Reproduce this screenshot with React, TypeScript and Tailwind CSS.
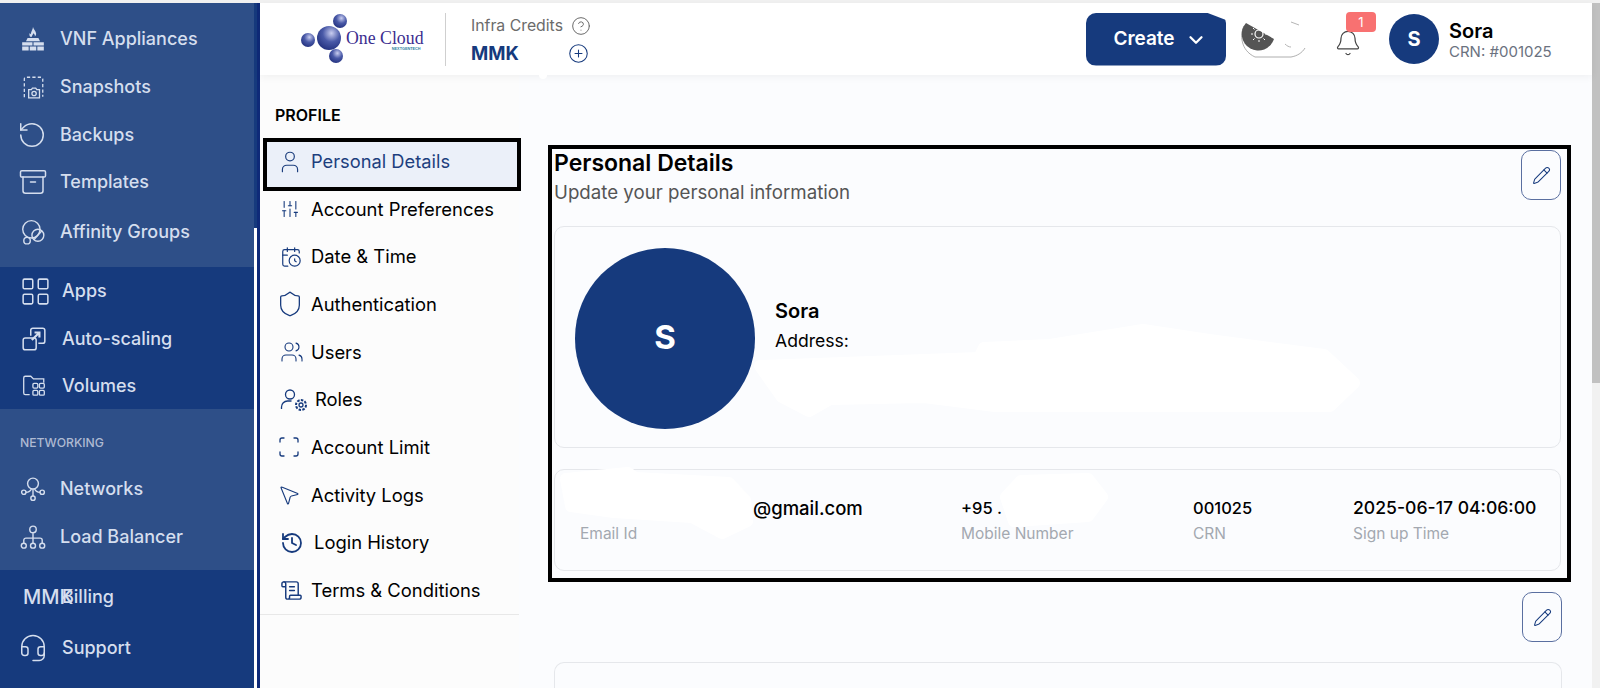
import React from 'react'
import { Archive, ChevronDown, CircleHelp, CirclePlus, Headset, History, LayoutGrid, MousePointer2, Pencil, RotateCcw, Scan, ScrollText, Shield, SlidersVertical, User, Users, CalendarClock, Bell } from 'lucide-react'

const ic = 'w-[26px] h-[26px] shrink-0'

function FireWall() {
  return (
    <svg viewBox="0 0 24 24" className={ic} fill="currentColor">
      <path d="M12 1c.6 2.200 2.600 3.600 2.900 6 .1 1.100-.4 2-1.200 2.800.2-1.200-.3-2.300-1.400-3-.1 1.100-1.300 1.900-1.300 3.100H9.300c-.7-1-.8-2.200-.3-3.400.3.500.6.800 1 1 .1-2.500 1.900-4 2-6.500z" />
      <path d="M7 11h10l1.500 3h-13zM2 15h9.500v3H2zM12.500 15H22v3h-9.500zM2 19h6v3.500H2zM9 19h6v3.500H9zM16 19h6v3.500h-6z" />
    </svg>
  )
}
function SnapshotIcon() {
  return (
    <svg viewBox="0 0 24 24" className={ic} fill="none" stroke="currentColor" strokeWidth="1.200">
      <path strokeDasharray="3 2" d="M4 21.500V4.500a1.500 1.500 0 0 1 1.500-1.500h14a1.500 1.500 0 0 1 1.500 1.500V21" />
      <path d="M8 22v-7.500h2.500l1-1.500h3l1 1.500H18V22z" />
      <circle cx="13" cy="18" r="2" />
    </svg>
  )
}
function AffinityIcon() {
  return (
    <svg viewBox="0 0 24 24" className={ic} fill="none" stroke="currentColor" strokeWidth="1.300">
      <circle cx="10.500" cy="9.500" r="8" />
      <circle cx="16.500" cy="15" r="5.500" />
      <circle cx="6.500" cy="20" r="3" />
      <path d="M13 19 20 11" />
    </svg>
  )
}
function AutoScaleIcon() {
  return (
    <svg viewBox="0 0 24 24" className={ic} fill="none" stroke="currentColor" strokeWidth="1.400">
      <path d="M9 9V4a2 2 0 0 1 2-2h9a2 2 0 0 1 2 2v10a2 2 0 0 1-2 2h-4" />
      <rect x="2" y="11" width="12" height="11" rx="2" />
      <path d="M10 13l7-7M12.500 6H17v4.500" strokeWidth="2" />
    </svg>
  )
}
function VolumeIcon() {
  return (
    <svg viewBox="0 0 24 24" className={ic} fill="none" stroke="currentColor" strokeWidth="1.200">
      <path d="M8 20H4a1.500 1.500 0 0 1-1.500-1.500v-14A1.500 1.500 0 0 1 4 3h5l2.500 2.500H21V9" />
      <rect x="11" y="9.500" width="4.500" height="4.500" rx="1" />
      <rect x="17" y="9.500" width="4.500" height="4.500" rx="1" />
      <rect x="11" y="16" width="4.500" height="4.500" rx="1" />
      <rect x="17" y="16" width="4.500" height="4.500" rx="1" />
    </svg>
  )
}
function NetworkIcon() {
  return (
    <svg viewBox="0 0 24 24" className={ic} fill="none" stroke="currentColor" strokeWidth="1.300">
      <circle cx="12" cy="7" r="5" />
      <circle cx="3.500" cy="15" r="2" />
      <circle cx="20.500" cy="15" r="2" />
      <circle cx="12" cy="20.500" r="2" />
      <path d="M12 12v6.500M5.500 15c2 0 4-.5 5-3M18.500 15c-2 0-4-.5-5-3" />
    </svg>
  )
}
function BalancerIcon() {
  return (
    <svg viewBox="0 0 24 24" className={ic} fill="none" stroke="currentColor" strokeWidth="1.300">
      <circle cx="12" cy="5" r="3" />
      <circle cx="3.500" cy="20" r="2.300" />
      <circle cx="12" cy="20" r="2.300" />
      <circle cx="20.500" cy="20" r="2.300" />
      <path d="M12 8v9.500M3.500 17.500V15a2 2 0 0 1 2-2h13a2 2 0 0 1 2 2v2.500" />
    </svg>
  )
}
function RolesIcon() {
  return (
    <svg viewBox="0 0 28 24" className="h-[24px] w-[28px] shrink-0" fill="none" stroke="#163a7d" strokeWidth="1.300">
      <circle cx="10" cy="6.500" r="4.500" />
      <path d="M1.500 21v-2a6 6 0 0 1 6-6h4" />
      <circle cx="21" cy="17" r="2" />
      <circle cx="21" cy="17" r="5" strokeDasharray="2.500 1.300" strokeWidth="2" />
    </svg>
  )
}

function SideItem({ icon, label, h, wide }: { icon: React.ReactNode; label: string; h: string; wide?: boolean }) {
  return (
    <div className={`flex items-center pl-[20px] text-[#d5deee] ${h}`}>
      <div className={`${wide ? 'w-[42px] pl-[1px]' : 'w-[40px]'} shrink-0`}>{icon}</div>
      <span className="text-[18px] font-medium leading-none">{label}</span>
    </div>
  )
}

function Sidebar() {
  return (
    <aside className="flex w-[260px] shrink-0 bg-[#163a7d]">
      <div className="flex w-[254px] flex-col">
        <div className="flex h-[264px] flex-col bg-[#2e4f88] pt-[12px]">
          <SideItem h="h-[48px]" icon={<FireWall />} label="VNF Appliances" />
          <SideItem h="h-[48px]" icon={<SnapshotIcon />} label="Snapshots" />
          <SideItem h="h-[47px]" icon={<RotateCcw className="-ml-[3px] h-[30px] w-[30px]" strokeWidth={1.200} />} label="Backups" />
          <SideItem h="h-[48px]" icon={<Archive className="-ml-[2px] h-[30px] w-[30px]" strokeWidth={1.200} />} label="Templates" />
          <SideItem h="h-[51px]" icon={<AffinityIcon />} label="Affinity Groups" />
        </div>
        <div className="flex h-[142px] flex-col bg-[#163a7d]">
          <SideItem wide h="h-[48px]" icon={<LayoutGrid className="-ml-[2px] h-[33px] w-[33px]" strokeWidth={1.100} />} label="Apps" />
          <SideItem wide h="h-[47px]" icon={<AutoScaleIcon />} label="Auto-scaling" />
          <SideItem wide h="h-[47px]" icon={<VolumeIcon />} label="Volumes" />
        </div>
        <div className="flex h-[161px] flex-col bg-[#2e4f88]">
          <div className="flex h-[56px] items-center pl-[20px] pt-[12px] text-[12.200px] font-medium text-[#aebad2]">NETWORKING</div>
          <SideItem h="h-[48px]" icon={<NetworkIcon />} label="Networks" />
          <SideItem h="h-[47px]" icon={<BalancerIcon />} label="Load Balancer" />
        </div>
        <div className="flex h-[54px] items-center pl-[23px] text-[#d5deee]">
          <span className="w-0 text-[20px] font-medium leading-none">MMK</span>
          <span className="ml-[39px] text-[18px] font-medium leading-none">Billing</span>
        </div>
        <SideItem wide h="h-[48px]" icon={<Headset className="-ml-[3px] h-[30px] w-[30px]" strokeWidth={1.200} />} label="Support" />
      </div>
      <div className="mt-[225px] w-[3px] bg-white" />
      <div className="w-[3px] bg-[#0f2a78]" />
    </aside>
  )
}

function Logo() {
  return (
    <div className="flex h-[72px] w-[185px] items-center justify-end pr-[20px]">
      <div className="flex h-[54px] w-[124px] items-center">
        <svg viewBox="0 0 46 50" className="h-[50px] w-[46px] shrink-0">
          <defs>
            <radialGradient id="ball" cx="0.600" cy="0.300" r="0.800">
              <stop offset="0" stopColor="#c9cdf0" />
              <stop offset="0.450" stopColor="#4a5aa8" />
              <stop offset="1" stopColor="#1c2a78" />
            </radialGradient>
          </defs>
          <circle cx="39" cy="7" r="7" fill="url(#ball)" />
          <circle cx="28" cy="24" r="12" fill="url(#ball)" />
          <circle cx="7" cy="26" r="7" fill="url(#ball)" />
          <circle cx="35" cy="42" r="7" fill="url(#ball)" />
        </svg>
        <div className="-ml-[1px] flex flex-col items-end pt-[3px] font-['Liberation_Serif',serif] leading-none text-[#3b2d8f]">
          <span className="whitespace-nowrap text-[17.800px] leading-[18px]">One Cloud</span>
          <span className="mr-[3px] mt-[1px] font-['Liberation_Sans',sans-serif] text-[3.800px] font-bold text-[#2f7f9f]">NEXTGENTECH</span>
        </div>
      </div>
    </div>
  )
}

function Header() {
  return (
    <header className="relative z-10 flex h-[72px] items-center bg-white pr-[8px] shadow-[0_2px_8px_rgba(0,0,0,0.05)]">
      <Logo />
      <div className="h-[53px] w-px bg-[#cfcfcf]" />
      <div className="ml-[25px] flex w-[120px] flex-col">
        <div className="flex items-center justify-between text-[#6b6b6b]">
          <span className="whitespace-nowrap text-[15.800px]">Infra Credits</span>
          <CircleHelp className="h-[20px] w-[20px]" strokeWidth={1.200} />
        </div>
        <div className="mt-[5px] flex items-center justify-between pr-[2px] text-[#163a7d]">
          <span className="text-[18.500px] font-bold leading-none">MMK</span>
          <CirclePlus className="h-[21px] w-[21px]" strokeWidth={1.200} />
        </div>
      </div>
      <div className="ml-auto flex items-center">
        <button className="flex h-[53px] w-[140px] items-center justify-center gap-[10px] rounded-[10px] bg-[#163a7d] pl-[8px] pt-[1px] text-[19px] font-semibold text-white [clip-path:polygon(0_0,86%_0,100%_14%,100%_100%,0_100%)]">
          Create
          <ChevronDown className="h-[22px] w-[22px]" strokeWidth={2.500} />
        </button>
        <div className="ml-[15px] h-[38px] w-[65px]">
          <svg viewBox="0 0 65 38" className="h-[38px] w-[65px]" fill="none">
            <path d="M3 6C-1 14 -1 30 14 37H50C56 36 61 33 64 28" stroke="#9a9a9a" strokeWidth="0.800" />
            <path d="M5 3 A16.500 16.500 0 1 0 33 19 Z" fill="#555555" />
            <circle cx="18" cy="14" r="4" stroke="#ffffff" strokeWidth="1.200" />
            <path d="M18 6v2M18 20v2M10 14h2M24 14h2M12 8l1.500 1.500M24 8l-1.500 1.500M12 20l1.500-1.500M24 20l-1.500-1.500" stroke="#ffffff" strokeWidth="1" />
            <path d="M50 2l8 3M44 24c2 2 4 3 6 3" stroke="#b5b5b5" strokeWidth="1" />
          </svg>
        </div>
        <div className="relative ml-[30px] h-[36px] w-[40px]">
          <Bell className="absolute bottom-0 -left-[2px] h-[28px] w-[28px] text-[#444]" strokeWidth={1.050} />
          <span className="absolute right-0 top-[-9px] flex h-[20px] w-[30px] items-center justify-center rounded-[4px] bg-[#f87171] text-[13px] leading-none text-white">1</span>
        </div>
        <div className="ml-[13px] flex h-[50px] w-[50px] items-center justify-center rounded-full bg-[#163a7d] text-[20px] font-bold text-white">S</div>
        <div className="ml-[10px] flex w-[135px] flex-col pt-[4px]">
          <span className="text-[20px] font-semibold leading-[22px] text-black">Sora</span>
          <span className="text-[15px] leading-[20px] text-[#6b7280]">CRN: #001025</span>
        </div>
      </div>
    </header>
  )
}

const subItems: { icon: React.ReactNode; label: string; pad?: string }[] = [
  { icon: <SlidersVertical className="h-[20px] w-[20px]" strokeWidth={1.300} />, label: 'Account Preferences' },
  { icon: <CalendarClock className="h-[22px] w-[22px]" strokeWidth={1.300} />, label: 'Date & Time' },
  { icon: <Shield className="-ml-[4px] h-[28px] w-[28px]" strokeWidth={1.100} />, label: 'Authentication' },
  { icon: <Users className="h-[24px] w-[24px]" strokeWidth={1.100} />, label: 'Users' },
  { icon: <RolesIcon />, label: 'Roles', pad: 'ml-[4px]' },
  { icon: <Scan className="-ml-[3px] h-[24px] w-[24px]" strokeWidth={1.300} />, label: 'Account Limit' },
  { icon: <MousePointer2 className="-ml-[3px] h-[24px] w-[24px]" strokeWidth={1.100} />, label: 'Activity Logs' },
  { icon: <History className="h-[24px] w-[24px]" strokeWidth={1.800} />, label: 'Login History', pad: 'ml-[3px]' },
  { icon: <ScrollText className="h-[23px] w-[23px]" strokeWidth={1.500} />, label: 'Terms & Conditions' },
]

function SubNav() {
  return (
    <nav className="relative w-[259px] shrink-0 bg-[#fcfcfc]">
      <div className="flex h-[63px] items-end pb-[10px] pl-[15px] text-[16px] font-semibold leading-[26px] text-black">PROFILE</div>
      <div className="relative z-10 ml-[3px] flex h-[53px] w-[258px] items-center border-4 border-black bg-[#ebf0f9] pb-[6px] pl-[10px] text-[#1d3f7e]">
        <User className="h-[26px] w-[26px]" strokeWidth={1.100} />
        <span className="ml-[8px] text-[18.300px] leading-none">Personal Details</span>
      </div>
      <div className="-mt-[6px] flex flex-col border-b border-[#e8e8e8]">
        {subItems.map((it) => (
          <div key={it.label} className="flex h-[47.700px] items-center pl-[20px] text-black">
            <div className="flex w-[31px] shrink-0 items-center text-[#163a7d]">{it.icon}</div>
            <span className={`text-[18.400px] leading-none ${it.pad ?? ''}`}>{it.label}</span>
          </div>
        ))}
      </div>
    </nav>
  )
}

function EditButton() {
  return (
    <button className="flex h-[50px] w-[40px] items-center justify-center rounded-[10px] border border-[#5a6fa0] text-[#163a7d]">
      <Pencil className="h-[19px] w-[19px]" strokeWidth={1.300} />
    </button>
  )
}

function Field({ value, label, width, valueClass }: { value: string; label: string; width?: string; valueClass?: string }) {
  return (
    <div className={`flex flex-col ${width ?? ''}`}>
      <span className={`font-medium leading-[24px] text-black ${valueClass ?? 'text-[16.500px]'}`}>{value}</span>
      <span className="mt-[3px] text-[15.500px] leading-[22px] text-[#a3a8b0]">{label}</span>
    </div>
  )
}

function Content() {
  return (
    <main className="flex-1 bg-[#fbfcfe] pl-[29px] pr-[21px] pt-[70px]">
      <section className="h-[437px] w-[1023px] border-4 border-black pl-[2px] pr-[6px]">
        <div className="flex justify-between pt-[1px]">
          <div className="flex flex-col">
            <h2 className="text-[23px] font-semibold leading-[26px] text-black">Personal Details</h2>
            <p className="mt-[5px] text-[18.700px] leading-[24px] text-[#555]">Update your personal information</p>
          </div>
          <EditButton />
        </div>
        <div className="mt-[21px] flex h-[222px] items-center gap-[20px] rounded-[10px] border border-[#e5e7eb] pl-[20px]">
          <div className="mt-[2px] flex h-[181px] w-[180px] items-center justify-center rounded-full bg-[#163a7d] text-[33px] font-bold text-white">S</div>
          <div className="flex flex-col gap-[6px] self-center pb-[22px]">
            <span className="text-[20px] font-semibold leading-[24px] text-black">Sora</span>
            <span className="text-[17.600px] leading-[24px] text-black">Address:</span>
          </div>
        </div>
        <div className="mt-[21px] flex h-[102px] items-center rounded-[10px] border border-[#e5e7eb] pl-[25px]">
          <div className="flex w-[381px] flex-col">
            <span className="pl-[173px] text-[18.500px] font-medium leading-[24px] text-black">@gmail.com</span>
            <span className="mt-[3px] text-[15.500px] leading-[22px] text-[#a3a8b0]">Email Id</span>
          </div>
          <Field width="w-[232px]" value="+95 ." label="Mobile Number" />
          <Field width="w-[160px]" value="001025" label="CRN" />
          <Field value="2025-06-17 04:06:00" label="Sign up Time" valueClass="whitespace-nowrap text-[17.600px]" />
        </div>
      </section>
      <div className="mt-[10px] flex w-[1014px] justify-end">
        <EditButton />
      </div>
      <div className="ml-[6px] mt-[20px] h-[60px] w-[1008px] rounded-t-[10px] border border-b-0 border-[#e5e7eb]" />
    </main>
  )
}

export default function App() {
  return (
    <div className="relative flex h-[688px] w-[1600px] flex-col overflow-hidden bg-white font-['Inter',sans-serif]">
      <div className="h-[3px] bg-[#f1f1f1]" />
      <div className="flex min-h-0 flex-1">
        <Sidebar />
        <div className="flex min-w-0 flex-1 flex-col">
          <Header />
          <div className="flex min-h-0 flex-1">
            <SubNav />
            <Content />
          </div>
        </div>
        <div className="flex w-[8px] shrink-0 flex-col bg-[#f1f1f1]">
          <div className="h-[380px] bg-[#c1c1c1]" />
        </div>
      </div>
      {/* hand-painted redactions from the original screenshot */}
      <svg className="pointer-events-none absolute left-0 top-0 z-20 h-[688px] w-[1600px]" viewBox="0 0 1600 688" fill="#ffffff" stroke="#ffffff" strokeWidth="12" strokeLinejoin="round">
        <path d="M760 366 979 358 984 348 1050 345 1143 330 1209 340 1324 355 1354 383 1330 406 995 406 924 397 830 399 809 411 782 397z" />
        <path d="M566 479 628 473 635 478 729 483 745 500 747 521 722 533 692 517 614 512 571 506z" />
        <path d="M1006 497 1021 481 1088 479 1102 497 1088 516 1014 521z" />
        <path d="M543 74v1" strokeWidth="8" strokeLinecap="round" />
      </svg>
    </div>
  )
}
